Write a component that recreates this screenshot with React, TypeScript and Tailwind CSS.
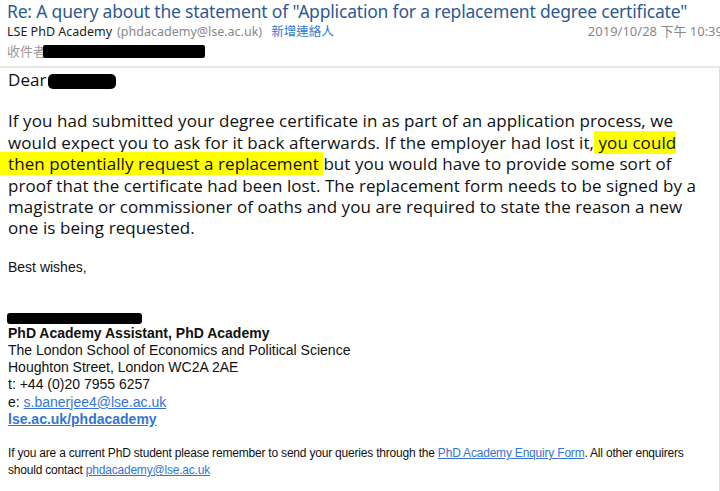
import React from "react";

export default function App() {
  const hl = "bg-[#ffff00]";
  return (
    <div className="w-[720px] h-[491px] overflow-hidden bg-white relative">
      {/* header */}
      <div className="pl-[7px] pt-[1px] h-[66px] font-['Noto_Sans','Noto_Sans_CJK_TC',sans-serif]">
        <div className="text-[17.5px] leading-[20px] text-[#2d5a94] whitespace-nowrap tracking-[-0.19px]">
          Re: A query about the statement of "Application for a replacement degree certificate"
        </div>
        <div className="flex items-baseline justify-between text-[12.5px] leading-[16px] whitespace-nowrap mt-[2px]">
          <div className="flex items-baseline">
            <span className="text-[#222]">LSE PhD Academy</span>
            <span className="text-[#888] ml-[5px]">(phdacademy@lse.ac.uk)</span>
            <span className="text-[#2f7ad0] ml-[9px]">新增連絡人</span>
          </div>
          <span className="text-[#888] text-[13px] mr-[-3px]">2019/10/28 下午 10:39</span>
        </div>
        <div className="flex items-center mt-[3px] text-[13px] leading-[16px]">
          <span className="text-[#999]">收件者:</span>
          <span className="ml-[-6px] inline-block w-[162px] h-[13px] bg-black rounded-[2px]" />
        </div>
      </div>
      <div className="h-[2px] bg-[#e6e6e6]" />
      <div className="border-r border-[#e0e0e0] h-[423px] pl-[8px]">
        <div className="font-['Open_Sans',sans-serif] text-[17px] leading-[21.4px] text-[#111] tracking-[0.07px] pt-[1px]">
          <div className="flex items-center">
            <span>Dear</span>
            <span className="inline-block w-[68px] h-[15px] bg-black rounded-[5px] ml-[1px] mt-[3px]" />
          </div>
          <div className="mt-[20px] whitespace-nowrap">
            If you had submitted your degree certificate in as part of an application process, we
            <br />
            would expect you to ask for it back afterwards. If the employer had lost it,<span className={hl}> you could</span>
            <br />
            <span className={`${hl} -ml-[8px] pl-[8px]`}>then potentially request a replacement </span>but you would have to provide some sort of
            <br />
            proof that the certificate had been lost. The replacement form needs to be signed by a
            <br />
            magistrate or commissioner of oaths and you are required to state the reason a new
            <br />
            one is being requested.
          </div>
        </div>
        <div className="font-['Liberation_Sans',Arial,sans-serif] text-[14px] leading-[16px] text-[#111] mt-[20px]">
          Best wishes,
        </div>
        <div className="mt-[38px] w-[135px] h-[11px] bg-black rounded-[3px] -ml-[1px]" />
        <div className="font-['Liberation_Sans',Arial,sans-serif] text-[14px] leading-[17.2px] text-[#111] mt-[1px]">
          <div className="font-bold">PhD Academy Assistant, PhD Academy</div>
          <div>The London School of Economics and Political Science</div>
          <div>Houghton Street, London WC2A 2AE</div>
          <div>t: +44 (0)20 7955 6257</div>
          <div>
            e: <span className="text-[#3574d4] underline">s.banerjee4@lse.ac.uk</span>
          </div>
          <div className="font-bold text-[#3574d4] underline">lse.ac.uk/phdacademy</div>
        </div>
        <div className="font-['Liberation_Sans',Arial,sans-serif] text-[12px] leading-[17px] text-[#111] mt-[17px] whitespace-nowrap tracking-[-0.2px]">
          If you are a current PhD student please remember to send your queries through the{" "}
          <span className="text-[#3574d4] underline">PhD Academy Enquiry Form</span>. All other enquirers
          <br />
          should contact <span className="text-[#3574d4] underline">phdacademy@lse.ac.uk</span>
        </div>
      </div>
    </div>
  );
}
